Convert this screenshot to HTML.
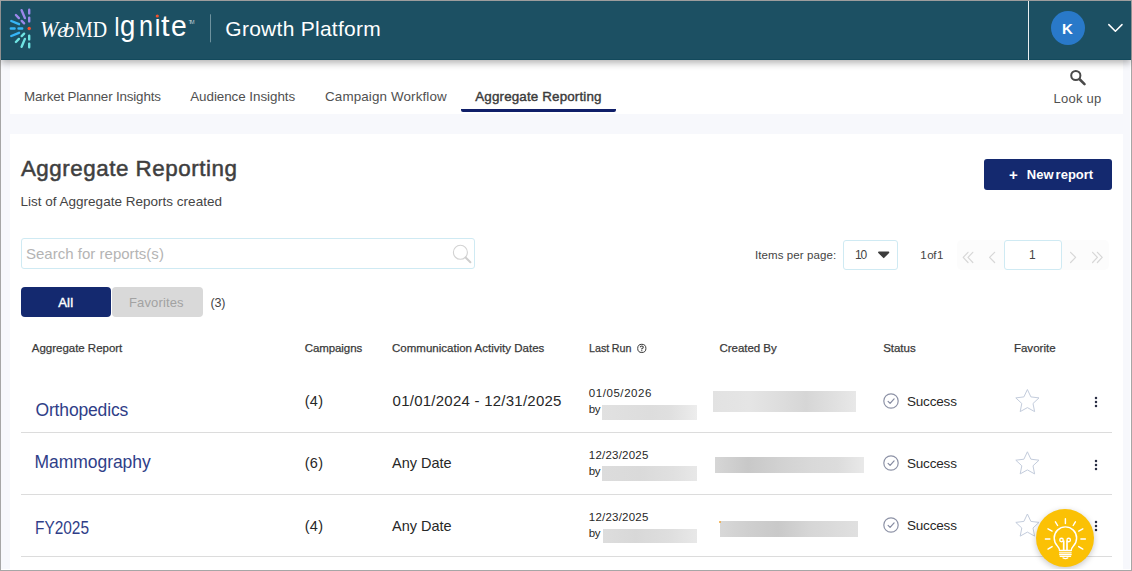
<!DOCTYPE html>
<html lang="en">
<head>
<meta charset="utf-8">
<title>Aggregate Reporting - Growth Platform</title>
<style>
*{box-sizing:border-box;margin:0;padding:0}
html,body{width:1132px;height:571px;overflow:hidden}
body{position:relative;background:#f7f8fc;font-family:"Liberation Sans",sans-serif;color:#3d3d3d}
.a{position:absolute}
.t{position:absolute;white-space:pre;line-height:1}
svg{position:absolute;overflow:visible}
#frame{left:0;top:0;width:1132px;height:571px;border:1px solid #a6a6a6;z-index:50}
#edge{left:1px;top:60px;width:1130px;height:510px;border-right:1px solid #fff;border-bottom:1px solid #fff;z-index:49}
#hdr{left:1px;top:1px;width:1130px;height:59px;background:#1c5063;box-shadow:0 3px 7px rgba(0,0,0,.30),inset 0 -1px 0 #12495c;z-index:51}
#nav{left:10px;top:60px;width:1113px;height:54px;background:#fff}
#card{left:10px;top:134px;width:1113px;height:436px;background:#fff}
.hl{position:absolute;height:1px;background:#dcdcdc;left:21px;width:1091px}
.box{position:absolute;border:1px solid #cfeaf3;border-radius:3px;background:#fff}
.red{position:absolute}
</style>
</head>
<body>
<div class="a" id="nav"></div>
<div class="a" id="card"></div>
<div class="a" id="hdr"></div>

<!-- header graphics -->
<svg style="left:0;top:0;z-index:52" width="230" height="60" viewBox="0 0 230 60">
  <g fill="none" stroke-width="2.4" stroke-linecap="round">
    <g stroke="#9b87ea">
      <path d="M29.2 9.8V13.4M29.2 17.6V21.4"/>
      <path d="M21.6 10.2L24.9 18.1"/>
      <path d="M15.9 15L18.9 18.1M21.7 20.9L24.1 23.3"/>
    </g>
    <g stroke="#36b5f6">
      <path d="M11.3 21L19 24.2"/>
      <path d="M10.8 28.5H14.6M18.5 28.5H22.2"/>
      <path d="M11.3 36L19 32.8"/>
    </g>
    <g stroke="#6fe3e2">
      <path d="M15.9 42L18.9 38.9M21.7 36.1L24.1 33.7"/>
      <path d="M21.6 46.8L24.9 38.9"/>
      <path d="M29.2 47.2V43.6M29.2 39.4V35.6"/>
    </g>
  </g>
  <circle cx="29.2" cy="28.5" r="1.7" fill="#f5512b"/>
  <circle cx="157.3" cy="16" r="1.6" fill="#f5512b"/>
  <rect x="210" y="14.3" width="1" height="28" fill="#6e929e"/>
</svg>
<div class="a" style="left:1028px;top:1px;width:1px;height:59px;background:#e9eff1;z-index:52"></div>
<div class="a" style="left:1051px;top:11px;width:34.4px;height:34.4px;border-radius:50%;background:#2979c9;z-index:52"></div>
<svg style="left:1100px;top:16px;z-index:52" width="30" height="24" viewBox="1100 16 30 24"><path d="M1108.8 24.6L1115.4 31.2L1122 24.6" fill="none" stroke="#fff" stroke-width="1.5" stroke-linecap="round" stroke-linejoin="round"/></svg>

<!-- nav -->
<div class="a" style="left:461px;top:109px;width:155px;height:3px;border-radius:0 0 2px 2px;background:#101f69"></div>
<svg style="left:1066px;top:66px" width="24" height="24" viewBox="1066 66 24 24"><circle cx="1075.8" cy="75.5" r="4.6" fill="none" stroke="#4a4a4a" stroke-width="2"/><path d="M1079.6 79.3L1084.5 84.1" stroke="#4a4a4a" stroke-width="2.6" stroke-linecap="round"/></svg>

<!-- toolbar -->
<div class="a" style="left:984px;top:159px;width:128px;height:31px;border-radius:3px;background:#14296f"></div>
<div class="box" style="left:21px;top:238px;width:454px;height:31px"></div>
<svg style="left:448px;top:240px" width="26" height="26" viewBox="448 240 26 26"><circle cx="460.4" cy="252.3" r="7" fill="none" stroke="#d3d3d3" stroke-width="1.1"/><path d="M465.6 257.5L470.4 262.2" stroke="#cecece" stroke-width="2" stroke-linecap="round"/></svg>
<div class="a" style="left:21px;top:287px;width:90px;height:30px;border-radius:4px;background:#14296f"></div>
<div class="a" style="left:112px;top:287px;width:91px;height:30px;border-radius:4px;background:#d9d9d9"></div>
<div class="box" style="left:843px;top:240px;width:55px;height:30px"></div>
<svg style="left:876px;top:250px" width="16" height="10" viewBox="876 250 16 10"><path d="M878.9 252.4H888.5L883.7 257.3Z" fill="#3c3c3c" stroke="#3c3c3c" stroke-width="1.6" stroke-linejoin="round"/></svg>
<div class="a" style="left:957px;top:240px;width:152px;height:30px;border-radius:5px;background:#fcfcfc"></div>
<div class="box" style="left:1004px;top:240px;width:58px;height:30px"></div>
<svg style="left:957px;top:248px" width="152" height="18" viewBox="957 248 152 18"><g fill="none" stroke="#d7d7d7" stroke-width="1.2" stroke-linecap="round" stroke-linejoin="round"><path d="M968 252.3L963.2 257.4L968 262.5M972.8 252.3L968 257.4L972.8 262.5"/><path d="M994.6 252.3L989.6 257.4L994.6 262.5"/><path d="M1070.6 252.3L1075.6 257.4L1070.6 262.5"/><path d="M1092.6 252.3L1097.4 257.4L1092.6 262.5M1097.4 252.3L1102.2 257.4L1097.4 262.5"/></g></svg>

<!-- table -->
<svg style="left:636px;top:343px" width="12" height="12" viewBox="636 343 12 12"><circle cx="641.8" cy="348.4" r="4.1" fill="none" stroke="#3a3a3a" stroke-width="1"/><path d="M640.3 347.3Q640.3 346 641.8 346Q643.3 346 643.3 347.2Q643.3 348 641.8 348.7V349.4" fill="none" stroke="#3a3a3a" stroke-width="1.05"/><circle cx="641.8" cy="350.7" r="0.6" fill="#3a3a3a"/></svg>
<div class="hl" style="top:432px"></div>
<div class="hl" style="top:494px"></div>
<div class="hl" style="top:556px"></div>

<div class="red" style="left:602px;top:405.2px;width:95.1px;height:14.6px;background:linear-gradient(90deg,#e1e1e1 0%,#dddddd 50%,#dfdfdf 70%,#e7e7e7 88%,#ededed 100%)"></div>
<div class="red" style="left:713px;top:391.1px;width:143.2px;height:20.9px;background:linear-gradient(90deg,#e2e2e2 0%,#e5e5e5 25%,#dedede 45%,#d6d6d6 65%,#e0e0e0 85%,#e8e8e8 100%)"></div>
<svg style="left:880.9px;top:391.0px" width="20" height="20" viewBox="-10 -10 20 20"><circle r="7.2" fill="none" stroke="#8d92a6" stroke-width="1.2"/><path d="M-2.9 0.3L-0.9 2.3L3.1 -2.1" fill="none" stroke="#858aa0" stroke-width="1.2" stroke-linecap="round" stroke-linejoin="round"/></svg>
<svg style="left:0;top:0" width="1132" height="571" viewBox="0 0 1132 571"><path d="M1027.4 389.5L1030.9 396.9L1039.0 397.9L1033.0 403.5L1034.6 411.6L1027.4 407.6L1020.2 411.6L1021.8 403.5L1015.8 397.9L1023.9 396.9Z" fill="#fff" stroke="#c3ccdc" stroke-width="1" stroke-linejoin="miter"/></svg>
<svg style="left:1089.6px;top:393.5px" width="12" height="16" viewBox="-6 -8 12 16"><circle cy="-4" r="1.25" fill="#2a2f45"/><circle r="1.25" fill="#2a2f45"/><circle cy="4" r="1.25" fill="#2a2f45"/></svg>
<div class="red" style="left:602px;top:466px;width:95.1px;height:14.8px;background:linear-gradient(90deg,#dcdcdc 0%,#dadada 40%,#e0e0e0 75%,#e8e8e8 100%)"></div>
<div class="red" style="left:715.2px;top:457px;width:148.9px;height:15.9px;background:linear-gradient(90deg,#d6d6d6 0%,#c8c8c8 22%,#d2d2d2 45%,#d9d9d9 65%,#dcdcdc 82%,#e9e9e9 100%)"></div>
<svg style="left:880.6px;top:453.2px" width="20" height="20" viewBox="-10 -10 20 20"><circle r="7.2" fill="none" stroke="#8d92a6" stroke-width="1.2"/><path d="M-2.9 0.3L-0.9 2.3L3.1 -2.1" fill="none" stroke="#858aa0" stroke-width="1.2" stroke-linecap="round" stroke-linejoin="round"/></svg>
<svg style="left:0;top:0" width="1132" height="571" viewBox="0 0 1132 571"><path d="M1027.4 451.8L1030.9 459.2L1039.0 460.2L1033.0 465.8L1034.6 473.9L1027.4 469.9L1020.2 473.9L1021.8 465.8L1015.8 460.2L1023.9 459.2Z" fill="#fff" stroke="#c3ccdc" stroke-width="1" stroke-linejoin="miter"/></svg>
<svg style="left:1089.6px;top:456.5px" width="12" height="16" viewBox="-6 -8 12 16"><circle cy="-4" r="1.25" fill="#2a2f45"/><circle r="1.25" fill="#2a2f45"/><circle cy="4" r="1.25" fill="#2a2f45"/></svg>
<div class="red" style="left:603px;top:529px;width:94.1px;height:13.8px;background:linear-gradient(90deg,#dddddd 0%,#d8d8d8 35%,#dedede 70%,#e8e8e8 100%)"></div>
<div class="red" style="left:720px;top:521.1px;width:137.8px;height:15.9px;background:linear-gradient(90deg,#d8d8d8 0%,#cfcfcf 20%,#c9c9c9 42%,#d6d6d6 65%,#e0e0e0 100%)"></div>
<svg style="left:880.6px;top:514.9px" width="20" height="20" viewBox="-10 -10 20 20"><circle r="7.2" fill="none" stroke="#8d92a6" stroke-width="1.2"/><path d="M-2.9 0.3L-0.9 2.3L3.1 -2.1" fill="none" stroke="#858aa0" stroke-width="1.2" stroke-linecap="round" stroke-linejoin="round"/></svg>
<svg style="left:0;top:0" width="1132" height="571" viewBox="0 0 1132 571"><path d="M1027.4 514.0L1030.9 521.4L1039.0 522.4L1033.0 528.0L1034.6 536.1L1027.4 532.1L1020.2 536.1L1021.8 528.0L1015.8 522.4L1023.9 521.4Z" fill="#fff" stroke="#c3ccdc" stroke-width="1" stroke-linejoin="miter"/></svg>
<svg style="left:1089.6px;top:518.3px" width="12" height="16" viewBox="-6 -8 12 16"><circle cy="-4" r="1.25" fill="#2a2f45"/><circle r="1.25" fill="#2a2f45"/><circle cy="4" r="1.25" fill="#2a2f45"/></svg>
<div class="a" style="left:719.3px;top:521.3px;width:2px;height:2px;border-radius:1px;background:#f2a93b"></div>

<div class="t" style="left:40.34px;top:18.00px;font-size:23px;color:#ffffff;font-family:'Liberation Serif',serif;font-style:italic;transform:scale(0.9550,1.0000);transform-origin:0 19.00px;z-index:53;">W</div>
<div class="t" style="left:57.30px;top:20.00px;font-size:21.5px;color:#ffffff;font-family:'Liberation Serif',serif;font-style:italic;letter-spacing:-3.343px;z-index:53;">eb</div>
<div class="t" style="left:74.60px;top:19.00px;font-size:22.8px;color:#ffffff;font-family:'Liberation Serif',serif;transform:scale(0.8740,1.0000);transform-origin:0 18.00px;z-index:53;">MD</div>
<div class="t" style="left:113.65px;top:13.00px;font-size:27.2px;color:#ffffff;transform:scale(0.7750,1.0000);transform-origin:0 23.00px;z-index:53;">I</div>
<div class="t" style="left:120.27px;top:14.00px;font-size:26.7px;color:#ffffff;transform:scale(1.0308,1.1000);transform-origin:0 22.00px;z-index:53;">g</div>
<div class="t" style="left:138.75px;top:14.00px;font-size:26.7px;color:#ffffff;transform:scale(0.9462,1.1000);transform-origin:0 22.00px;z-index:53;">n</div>
<div class="t" style="left:153.97px;top:14.00px;font-size:26.7px;color:#ffffff;transform:scale(0.9667,1.1400);transform-origin:0 22.00px;z-index:53;">ı</div>
<div class="t" style="left:160.90px;top:14.00px;font-size:26.7px;color:#ffffff;transform:scale(1.1500,1.0800);transform-origin:0 22.00px;z-index:53;">t</div>
<div class="t" style="left:171.14px;top:14.00px;font-size:26.7px;color:#ffffff;transform:scale(1.0615,1.1000);transform-origin:0 22.00px;z-index:53;">e</div>
<div class="t" style="left:188.60px;top:20.00px;font-size:5.5px;color:#b9cbd2;letter-spacing:-1.960px;z-index:53;">TM</div>
<div class="t" style="left:225.30px;top:18.00px;font-size:21px;color:#ffffff;letter-spacing:0.270px;z-index:53;">Growth Platform</div>
<div class="t" style="left:1062.10px;top:21.00px;font-size:15px;color:#ffffff;font-weight:bold;z-index:53;">K</div>
<div class="t" style="left:24.10px;top:90.00px;font-size:13.4px;color:#505050;letter-spacing:-0.176px;">Market Planner Insights</div>
<div class="t" style="left:190.20px;top:90.00px;font-size:13.4px;color:#505050;letter-spacing:-0.044px;">Audience Insights</div>
<div class="t" style="left:325.00px;top:90.00px;font-size:13.4px;color:#505050;letter-spacing:0.131px;">Campaign Workflow</div>
<div class="t" style="left:475.30px;top:90.00px;font-size:13.4px;color:#3a3a3a;letter-spacing:0.143px;-webkit-text-stroke:0.4px #3a3a3a;">Aggregate Reporting</div>
<div class="t" style="left:1053.60px;top:92.00px;font-size:13px;color:#505050;letter-spacing:0.228px;">Look up</div>
<div class="t" style="left:20.90px;top:158.00px;font-size:22.4px;color:#3f3f3f;letter-spacing:0.518px;-webkit-text-stroke:0.5px #3f3f3f;">Aggregate Reporting</div>
<div class="t" style="left:20.40px;top:195.00px;font-size:13.5px;color:#444;letter-spacing:0.014px;">List of Aggregate Reports created</div>
<div class="t" style="left:25.90px;top:246.00px;font-size:15px;color:#b4b4b4;letter-spacing:0.023px;">Search for reports(s)</div>
<div class="t" style="left:58.20px;top:296.00px;font-size:13.2px;color:#ffffff;letter-spacing:0.137px;-webkit-text-stroke:0.4px #fff;">All</div>
<div class="t" style="left:129.00px;top:296.00px;font-size:13px;color:#a2a2a2;letter-spacing:0.130px;">Favorites</div>
<div class="t" style="left:210.50px;top:297.00px;font-size:12.5px;color:#444;letter-spacing:-0.157px;">(3)</div>
<div class="t" style="left:755.00px;top:250.00px;font-size:11.5px;color:#444;letter-spacing:0.092px;">Items per page:</div>
<div class="t" style="left:855.00px;top:249.00px;font-size:12px;color:#444;letter-spacing:-1.174px;">10</div>
<div class="t" style="left:920.30px;top:250.00px;font-size:11.5px;color:#444;letter-spacing:-0.535px;word-spacing:-1.5px;">1 of 1</div>
<div class="t" style="left:1029.00px;top:249.00px;font-size:12px;color:#444;">1</div>
<div class="t" style="left:1009.00px;top:167.00px;font-size:15px;color:#ffffff;font-weight:bold;">+</div>
<div class="t" style="left:1026.80px;top:168.00px;font-size:13px;color:#ffffff;font-weight:bold;letter-spacing:-0.008px;word-spacing:-1.5px;">New report</div>
<div class="t" style="left:31.80px;top:343.00px;font-size:11.5px;color:#3a3a3a;letter-spacing:-0.019px;-webkit-text-stroke:0.25px #3a3a3a;">Aggregate Report</div>
<div class="t" style="left:304.70px;top:343.00px;font-size:11.5px;color:#3a3a3a;letter-spacing:-0.077px;-webkit-text-stroke:0.25px #3a3a3a;">Campaigns</div>
<div class="t" style="left:392.00px;top:343.00px;font-size:11.5px;color:#3a3a3a;letter-spacing:0.008px;-webkit-text-stroke:0.25px #3a3a3a;">Communication Activity Dates</div>
<div class="t" style="left:588.60px;top:343.00px;font-size:11.5px;color:#3a3a3a;word-spacing:-0.5px;transform:scale(0.9328,1.0000);transform-origin:0 9.00px;-webkit-text-stroke:0.25px #3a3a3a;">Last Run</div>
<div class="t" style="left:719.50px;top:343.00px;font-size:11.5px;color:#3a3a3a;letter-spacing:-0.031px;-webkit-text-stroke:0.25px #3a3a3a;">Created By</div>
<div class="t" style="left:883.20px;top:343.00px;font-size:11.5px;color:#3a3a3a;letter-spacing:-0.030px;-webkit-text-stroke:0.25px #3a3a3a;">Status</div>
<div class="t" style="left:1013.90px;top:343.00px;font-size:11.5px;color:#3a3a3a;letter-spacing:0.022px;-webkit-text-stroke:0.25px #3a3a3a;">Favorite</div>
<div class="t" style="left:35.50px;top:402.00px;font-size:17.5px;color:#2f3e88;letter-spacing:-0.160px;">Orthopedics</div>
<div class="t" style="left:304.70px;top:394.00px;font-size:14.5px;color:#272727;letter-spacing:0.304px;">(4)</div>
<div class="t" style="left:392.60px;top:393.00px;font-size:15px;color:#272727;letter-spacing:0.244px;">01/01/2024 - 12/31/2025</div>
<div class="t" style="left:588.80px;top:388.00px;font-size:11.5px;color:#272727;letter-spacing:0.560px;">01/05/2026</div>
<div class="t" style="left:588.80px;top:404.00px;font-size:11.5px;color:#272727;letter-spacing:-0.396px;">by</div>
<div class="t" style="left:906.90px;top:395.00px;font-size:13.5px;color:#272727;letter-spacing:-0.162px;">Success</div>
<div class="t" style="left:34.50px;top:454.00px;font-size:17.5px;color:#2f3e88;letter-spacing:-0.046px;">Mammography</div>
<div class="t" style="left:304.70px;top:456.00px;font-size:14.5px;color:#272727;letter-spacing:0.304px;">(6)</div>
<div class="t" style="left:392.00px;top:456.00px;font-size:14.5px;color:#272727;letter-spacing:-0.011px;">Any Date</div>
<div class="t" style="left:588.80px;top:450.00px;font-size:11.5px;color:#272727;letter-spacing:0.216px;">12/23/2025</div>
<div class="t" style="left:588.80px;top:466.00px;font-size:11.5px;color:#272727;letter-spacing:-0.396px;">by</div>
<div class="t" style="left:906.90px;top:457.00px;font-size:13.5px;color:#272727;letter-spacing:-0.162px;">Success</div>
<div class="t" style="left:34.62px;top:520.00px;font-size:17.5px;color:#2f3e88;transform:scale(0.8815,1.0000);transform-origin:0 14.00px;">FY2025</div>
<div class="t" style="left:304.70px;top:519.00px;font-size:14.5px;color:#272727;letter-spacing:0.304px;">(4)</div>
<div class="t" style="left:392.00px;top:519.00px;font-size:14.5px;color:#272727;letter-spacing:-0.011px;">Any Date</div>
<div class="t" style="left:588.80px;top:512.00px;font-size:11.5px;color:#272727;letter-spacing:0.216px;">12/23/2025</div>
<div class="t" style="left:588.80px;top:528.00px;font-size:11.5px;color:#272727;letter-spacing:-0.396px;">by</div>
<div class="t" style="left:906.90px;top:519.00px;font-size:13.5px;color:#272727;letter-spacing:-0.162px;">Success</div>

<!-- help fab -->
<div class="a" style="left:1035.8px;top:509px;width:58.4px;height:58.4px;border-radius:50%;background:#fbc105;box-shadow:0 2px 6px rgba(0,0,0,.22);z-index:20"></div>
<svg style="left:1036px;top:509px;z-index:21" width="58" height="58" viewBox="1036 509 58 58"><g fill="none" stroke="#fff" stroke-width="1.45" stroke-linecap="round" stroke-linejoin="round">
<path d="M1059.5 550.5C1059.5 548.4 1058.7 547.3 1057.4 545.9A11.2 11.2 0 1 1 1073.4 545.9C1072.1 547.3 1071.3 548.4 1071.3 550.5Z"/>
<path d="M1059.6 552.8H1071.2M1059.6 554.7H1071.2M1060.2 556.3H1070.6M1063 557.9Q1065.4 559.2 1067.8 557.9" stroke-width="1.25"/>
<circle cx="1061.5" cy="540" r="1.75" stroke-width="1.3"/><circle cx="1068.7" cy="540" r="1.75" stroke-width="1.3"/>
<path d="M1063.7 540.6V550.2M1067 540.6V550.2" stroke-width="1.7" stroke-linecap="butt"/>
<path d="M1065.4 518.7V523.5M1055.4 521.8L1057.6 525.5M1075.4 521.8L1073.2 525.5M1048 528.8L1052.1 531.1M1082.8 528.8L1078.7 531.1M1045.4 538.9H1049.9M1080.9 538.9H1085.4M1048 549.1L1052.1 546.6M1082.8 549.1L1078.7 546.6"/>
</g></svg>

<div class="a" id="edge"></div>
<div class="a" id="frame"></div>
</body>
</html>
